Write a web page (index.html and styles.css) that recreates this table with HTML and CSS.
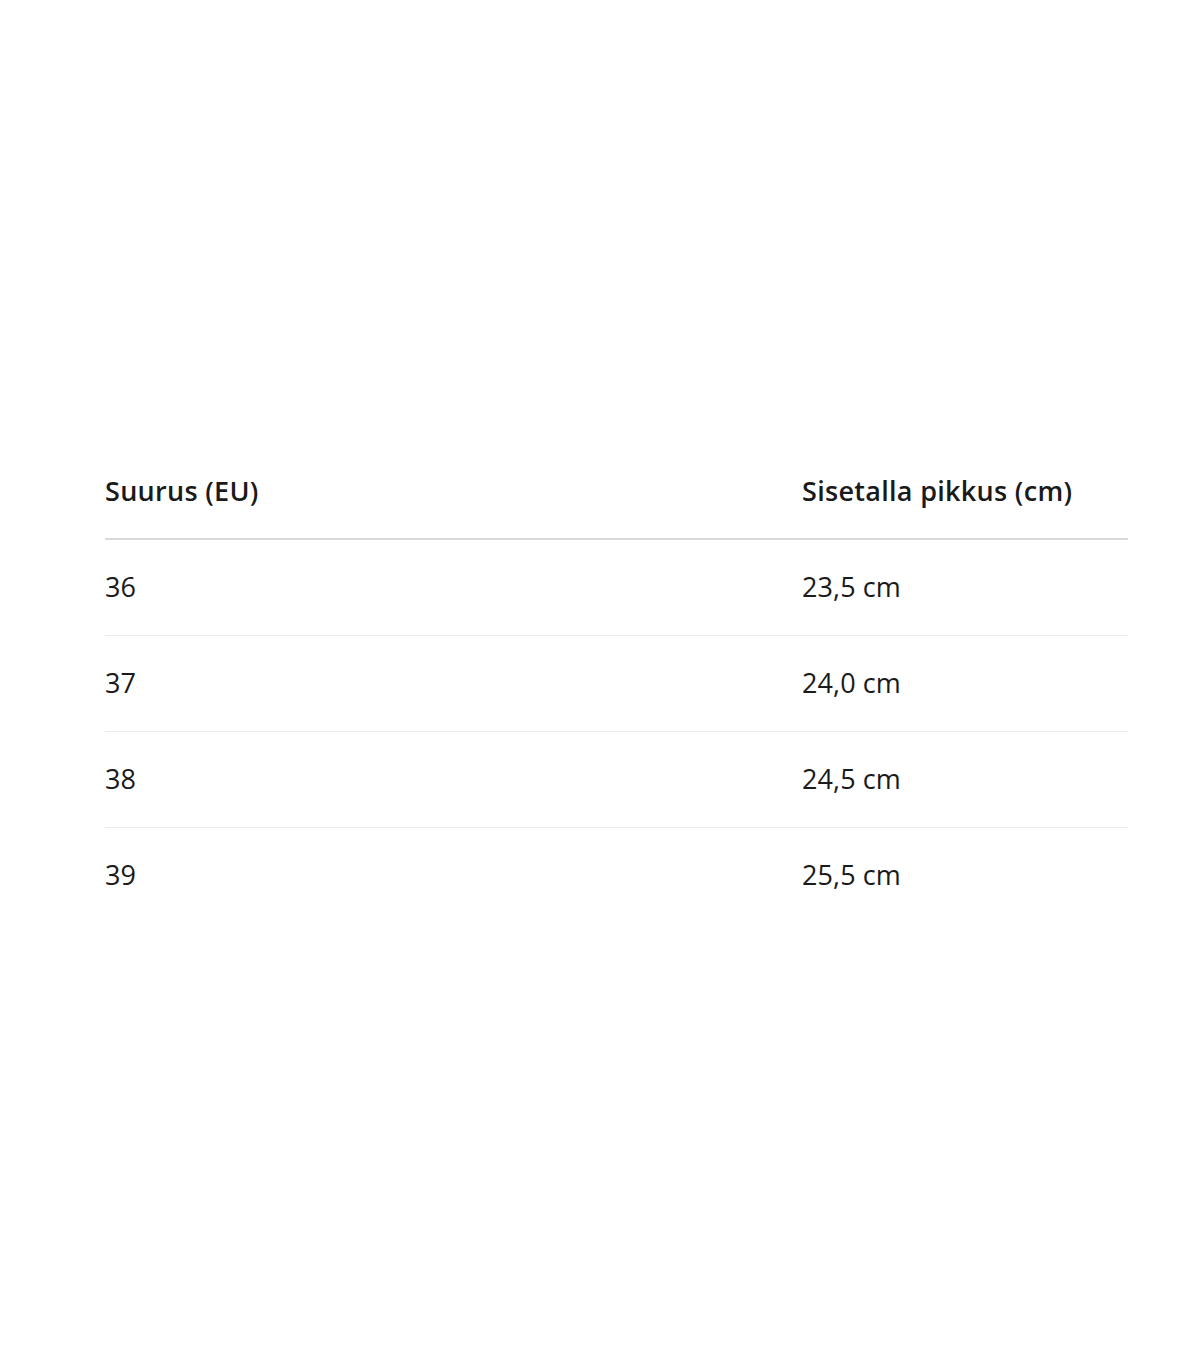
FILE: index.html
```html
<!DOCTYPE html>
<html lang="fi">
<head>
<meta charset="utf-8">
<link rel="stylesheet" href="styles.css">
</head>
<body>
<main class="page">
  <table class="size-table">
    <thead>
      <tr>
        <th class="col-size">Suurus (EU)</th>
        <th class="col-len">Sisetalla pikkus (cm)</th>
      </tr>
    </thead>
    <tbody>
      <tr><td>36</td><td>23,5 cm</td></tr>
      <tr><td>37</td><td>24,0 cm</td></tr>
      <tr><td>38</td><td>24,5 cm</td></tr>
      <tr><td>39</td><td>25,5 cm</td></tr>
    </tbody>
  </table>
</main>
</body>
</html>
```
FILE: styles.css
```css
html, body {
  margin: 0;
  padding: 0;
  background: #ffffff;
}
.page {
  width: 1200px;
  height: 1372px;
  box-sizing: border-box;
  padding: 443px 0 0 105px;
  font-family: "Open Sans", "Noto Sans", sans-serif;
  color: #1a1a1a;
}
.size-table {
  width: 1023px;
  border-collapse: collapse;
}
.size-table th,
.size-table td {
  padding: 0;
  text-align: left;
  vertical-align: middle;
  font-size: 27px;
  line-height: 1;
  letter-spacing: 0.1px;
}
.size-table th {
  font-weight: 600;
  height: 95px;
  letter-spacing: 0.3px;
  border-bottom: 2px solid #d9d9d9;
}
.col-size {
  width: 697px;
}
.size-table td {
  font-weight: 400;
  height: 96px;
  padding-bottom: 1px;
  box-sizing: border-box;
  border-bottom: 1px solid #ececec;
}
.size-table tbody tr:last-child td {
  border-bottom: none;
}
```
